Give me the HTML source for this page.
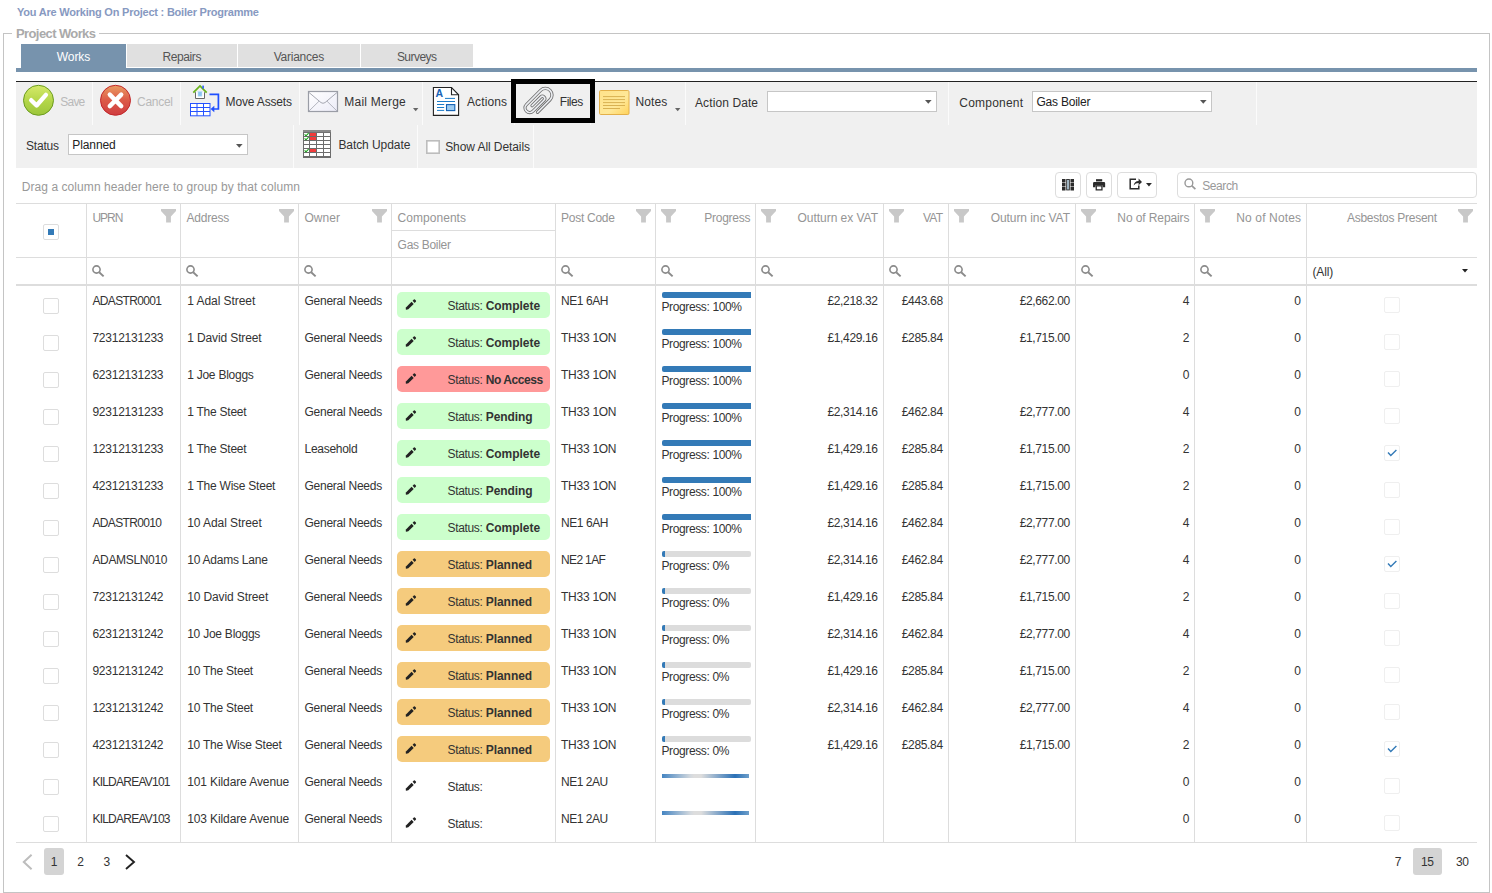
<!DOCTYPE html>
<html lang="en"><head><meta charset="utf-8"><title>Project Works</title>
<style>
html,body{margin:0;padding:0;background:#fff;}
body{width:1492px;height:893px;position:relative;overflow:hidden;font-family:"Liberation Sans",sans-serif;}
.t{position:absolute;white-space:nowrap;line-height:14px;}
svg{overflow:visible;}
</style></head><body>
<span class="t" style="top:5px;font-size:11px;color:#8799c1;letter-spacing:-0.22px;font-weight:bold;left:17px;">You Are Working On Project : Boiler Programme</span>
<div style="position:absolute;left:3px;top:33px;width:1485px;height:858px;border:1px solid #c4c4c4;"></div>
<div style="position:absolute;left:12px;top:26px;width:87px;height:14px;background:#fff;"></div>
<span class="t" style="top:27px;font-size:13px;color:#aaa;letter-spacing:-0.60px;font-weight:bold;left:16px;">Project Works</span>
<div style="position:absolute;left:16px;top:68px;width:1461px;height:4px;background:#7793ad;"></div>
<div style="position:absolute;left:21px;top:44px;width:105px;height:24px;background:#7793ad;"></div>
<div style="position:absolute;left:127px;top:44px;width:110px;height:23px;background:#e0e0e0;"></div>
<span class="t" style="top:50px;font-size:12px;color:#555;letter-spacing:-0.43px;left:-18px;width:399.571px;text-align:center;padding-left:0px;">Repairs</span>
<div style="position:absolute;left:238px;top:44px;width:122px;height:23px;background:#e0e0e0;"></div>
<span class="t" style="top:50px;font-size:12px;color:#555;letter-spacing:-0.25px;left:99px;width:399.745px;text-align:center;padding-left:0px;">Variances</span>
<div style="position:absolute;left:361px;top:44px;width:112px;height:23px;background:#e0e0e0;"></div>
<span class="t" style="top:50px;font-size:12px;color:#555;letter-spacing:-0.52px;left:217px;width:399.483px;text-align:center;padding-left:0px;">Surveys</span>
<span class="t" style="top:50px;font-size:12px;color:#fff;letter-spacing:-0.08px;left:-126.5px;width:399.922px;text-align:center;padding-left:0px;">Works</span>
<div style="position:absolute;left:16px;top:81px;width:1461px;height:1px;background:#222;"></div>
<div style="position:absolute;left:16px;top:82px;width:1461px;height:86px;background:#f0f0f0;"></div>
<div style="position:absolute;left:92px;top:82px;width:1px;height:43px;background:#fbfbfb;"></div>
<div style="position:absolute;left:180px;top:82px;width:1px;height:43px;background:#fbfbfb;"></div>
<div style="position:absolute;left:299px;top:82px;width:1px;height:43px;background:#fbfbfb;"></div>
<div style="position:absolute;left:422px;top:82px;width:1px;height:43px;background:#fbfbfb;"></div>
<div style="position:absolute;left:514px;top:82px;width:1px;height:43px;background:#fbfbfb;"></div>
<div style="position:absolute;left:590px;top:82px;width:1px;height:43px;background:#fbfbfb;"></div>
<div style="position:absolute;left:685px;top:82px;width:1px;height:43px;background:#fbfbfb;"></div>
<div style="position:absolute;left:948px;top:82px;width:1px;height:43px;background:#fbfbfb;"></div>
<div style="position:absolute;left:1256px;top:82px;width:1px;height:43px;background:#fbfbfb;"></div>
<div style="position:absolute;left:293px;top:125px;width:1px;height:43px;background:#fbfbfb;"></div>
<div style="position:absolute;left:417px;top:125px;width:1px;height:43px;background:#fbfbfb;"></div>
<div style="position:absolute;left:533px;top:125px;width:1px;height:43px;background:#fbfbfb;"></div>
<svg style="position:absolute;left:22px;top:84px" width="33" height="33" viewBox="0 0 33 33"><defs><linearGradient id="gs" x1="0" y1="0" x2="0" y2="1"><stop offset="0" stop-color="#d6ea6a"/><stop offset="0.55" stop-color="#b2d548"/><stop offset="1" stop-color="#9cc63a"/></linearGradient></defs>
<circle cx="16.5" cy="16.3" r="15" fill="url(#gs)" stroke="#6c9c20" stroke-width="1"/>
<path d="M9.2 16.2 L14.6 21.5 L23.9 10.9" fill="none" stroke="#fff" stroke-width="4.4" stroke-linecap="round" stroke-linejoin="round"/></svg>
<span class="t" style="top:95px;font-size:12px;color:#b9b9b9;letter-spacing:-0.79px;left:60.3px;">Save</span>
<svg style="position:absolute;left:99px;top:84px" width="33" height="33" viewBox="0 0 33 33"><defs><linearGradient id="gc" x1="0" y1="0" x2="0" y2="1"><stop offset="0" stop-color="#ea9c62"/><stop offset="0.5" stop-color="#dc5a48"/><stop offset="1" stop-color="#cf3c40"/></linearGradient></defs>
<circle cx="16.5" cy="16.3" r="15" fill="url(#gc)" stroke="#c2282c" stroke-width="1"/>
<path d="M10.8 10.6 L22.2 22.1 M22.2 10.6 L10.8 22.1" fill="none" stroke="#fff" stroke-width="4.4" stroke-linecap="round"/></svg>
<span class="t" style="top:95px;font-size:12px;color:#b9b9b9;letter-spacing:-0.27px;left:137px;">Cancel</span>
<svg style="position:absolute;left:188px;top:84px" width="33" height="33" viewBox="0 0 33 33"><path d="M5.3 8.6 L12 1.9 L18.7 8.6" fill="none" stroke="#69b31c" stroke-width="1.8" stroke-linejoin="miter"/>
<rect x="14.3" y="1.6" width="1.6" height="3" fill="#2a5cff"/>
<path d="M7.5 8.2 V14.5 H16.5 V8.2" fill="#fff" stroke="#666" stroke-width="1"/>
<rect x="10" y="7.6" width="4" height="4.6" fill="#8cc4f0" stroke="#bfe0f8" stroke-width="0.6"/>
<rect x="2.5" y="19.5" width="19.5" height="12.3" fill="#fff" stroke="#2552ff" stroke-width="1"/>
<path d="M2.5 23.5 H22 M2.5 27.5 H22 M9 19.5 V31.8 M15.5 19.5 V31.8" stroke="#2552ff" stroke-width="1" fill="none"/>
<path d="M21.5 10.3 H30.4 V25 H25" fill="none" stroke="#1f4fff" stroke-width="1.7"/>
<path d="M22.6 25 L26.3 21.8 V28.2 Z" fill="#1f4fff"/></svg>
<span class="t" style="top:95px;font-size:12px;color:#333;letter-spacing:-0.16px;left:225.6px;">Move Assets</span>
<svg style="position:absolute;left:306px;top:89px" width="34" height="25" viewBox="0 0 34 25"><defs><linearGradient id="gm" x1="0" y1="0" x2="1" y2="1"><stop offset="0" stop-color="#ffffff"/><stop offset="1" stop-color="#ececf8"/></linearGradient></defs>
<rect x="2.5" y="2.5" width="29" height="20" fill="url(#gm)" stroke="#9a9da6" stroke-width="1.2"/>
<path d="M3 3.5 L15 13.6 Q17 15 19 13.6 L31 3.5" fill="none" stroke="#a6a8b2" stroke-width="1"/>
<path d="M3 22 L13 12.2 M31 22 L21 12.2" fill="none" stroke="#b4b6c0" stroke-width="1"/></svg>
<span class="t" style="top:95px;font-size:12px;color:#333;letter-spacing:0.23px;left:344.3px;">Mail Merge</span>
<svg style="position:absolute;left:413px;top:108px" width="6" height="4" viewBox="0 0 6 4"><path d="M0 0 H5.4 L2.7 3.2 Z" fill="#666"/></svg>
<svg style="position:absolute;left:431px;top:85px" width="30" height="33" viewBox="0 0 30 33"><path d="M2.4 2.5 H20.5 L27.6 9.8 V30.4 H2.4 Z" fill="#fff" stroke="#222" stroke-width="1.1"/>
<path d="M20.5 2.5 V9.8 H27.6" fill="none" stroke="#222" stroke-width="1.1"/>
<text x="4.6" y="11.8" font-family="Liberation Sans, sans-serif" font-weight="bold" font-size="10.5" fill="#1763b5">A</text>
<path d="M14 13.4 H24 M6 16.5 H24 M6 19.5 H13.2 M6 22.5 H13.2 M6 25.4 H13.2" stroke="#1a7cc9" stroke-width="1" fill="none"/>
<rect x="15.5" y="19.6" width="8.3" height="6" fill="#9ccbf0" stroke="#1160b2" stroke-width="1.1"/></svg>
<span class="t" style="top:95px;font-size:12px;color:#333;letter-spacing:0.11px;left:467px;">Actions</span>
<div style="position:absolute;left:511px;top:79px;width:74px;height:34px;border:5px solid #000;"></div>
<svg style="position:absolute;left:520px;top:84px" width="36" height="34" viewBox="0 0 36 34"><g transform="translate(18,17) rotate(-45)" fill="none" stroke-linecap="round" stroke-linejoin="round">
<path d="M-8.3 7.64 H9.4 A6.65 6.65 0 0 0 9.4 -5.66 H-10.7 A4.68 4.68 0 0 0 -10.7 3.7 H4.8 A2.3 2.3 0 0 0 4.8 -0.9 H-7.5" stroke="#707070" stroke-width="3.3"/>
<path d="M-8.3 7.64 H9.4 A6.65 6.65 0 0 0 9.4 -5.66 H-10.7 A4.68 4.68 0 0 0 -10.7 3.7 H4.8 A2.3 2.3 0 0 0 4.8 -0.9 H-7.5" stroke="#eceef2" stroke-width="1.6"/>
</g></svg>
<span class="t" style="top:95px;font-size:12px;color:#333;letter-spacing:-0.49px;left:559.8px;">Files</span>
<svg style="position:absolute;left:598px;top:89px" width="33" height="27" viewBox="0 0 33 27"><defs><linearGradient id="gn" x1="0" y1="0" x2="1" y2="1"><stop offset="0" stop-color="#ffe28a"/><stop offset="0.6" stop-color="#ffe898"/><stop offset="1" stop-color="#ffd25a"/></linearGradient></defs>
<rect x="1.5" y="1.5" width="29.5" height="24" rx="1.2" fill="url(#gn)" stroke="#e3b04a" stroke-width="1"/>
<path d="M5 7.6 H27 M5 10.6 H27 M5 13.6 H27 M5 16.5 H27 M5 19.5 H22" stroke="#d9b152" stroke-width="1" fill="none"/></svg>
<span class="t" style="top:95px;font-size:12px;color:#333;letter-spacing:0.11px;left:635.4px;">Notes</span>
<svg style="position:absolute;left:675px;top:108px" width="6" height="4" viewBox="0 0 6 4"><path d="M0 0 H5.4 L2.7 3.2 Z" fill="#666"/></svg>
<span class="t" style="top:96px;font-size:12px;color:#333;letter-spacing:0.10px;left:695px;">Action Date</span>
<div style="position:absolute;left:767px;top:91px;width:168px;height:19px;background:#fff;border:1px solid #c6c6c6;"></div>
<svg style="position:absolute;left:925px;top:100px" width="8" height="5" viewBox="0 0 8 5"><path d="M0 0 H6.6 L3.3 3.8 Z" fill="#555"/></svg>
<span class="t" style="top:96px;font-size:12px;color:#333;letter-spacing:0.21px;left:959.3px;">Component</span>
<div style="position:absolute;left:1032px;top:91px;width:178px;height:19px;background:#fff;border:1px solid #c6c6c6;"></div>
<span class="t" style="top:95px;font-size:12px;color:#222;letter-spacing:-0.23px;left:1036.5px;">Gas Boiler</span>
<svg style="position:absolute;left:1200px;top:100px" width="8" height="5" viewBox="0 0 8 5"><path d="M0 0 H6.6 L3.3 3.8 Z" fill="#555"/></svg>
<span class="t" style="top:139px;font-size:12px;color:#333;letter-spacing:-0.21px;left:26px;">Status</span>
<div style="position:absolute;left:68px;top:134px;width:178px;height:19px;background:#fff;border:1px solid #c6c6c6;"></div>
<span class="t" style="top:138px;font-size:12px;color:#222;letter-spacing:-0.09px;left:72.3px;">Planned</span>
<svg style="position:absolute;left:236px;top:144px" width="8" height="5" viewBox="0 0 8 5"><path d="M0 0 H6.6 L3.3 3.8 Z" fill="#555"/></svg>
<svg style="position:absolute;left:303px;top:130px" width="28" height="28" viewBox="0 0 28 28"><rect x="0" y="0" width="28" height="28" fill="#6c6c6c"/><rect x="0" y="0" width="28" height="2.2" fill="#8a8a8a"/><rect x="1" y="3" width="5" height="3" fill="#fff"/><rect x="7" y="3" width="6" height="3" fill="#f23c3c"/><rect x="14" y="3" width="6" height="3" fill="#fff"/><rect x="21" y="3" width="6" height="3" fill="#fff"/><path d="M1.6 4.4 L3 5.8 L5.6 3.2" stroke="#10a010" stroke-width="1.1" fill="none"/><rect x="1" y="7" width="5" height="3" fill="#fff"/><rect x="7" y="7" width="6" height="3" fill="#f23c3c"/><rect x="14" y="7" width="6" height="3" fill="#fff"/><rect x="21" y="7" width="6" height="3" fill="#fff"/><path d="M1.6 8.4 L3 9.8 L5.6 7.2" stroke="#10a010" stroke-width="1.1" fill="none"/><rect x="1" y="11" width="5" height="3" fill="#fff"/><rect x="7" y="11" width="6" height="3" fill="#fff"/><rect x="14" y="11" width="6" height="3" fill="#fff"/><rect x="21" y="11" width="6" height="3" fill="#fff"/><rect x="1" y="15" width="5" height="3" fill="#fff"/><rect x="7" y="15" width="6" height="3" fill="#fff"/><rect x="14" y="15" width="6" height="3" fill="#fff"/><rect x="21" y="15" width="6" height="3" fill="#fff"/><rect x="1" y="19" width="5" height="3" fill="#fff"/><rect x="7" y="19" width="6" height="3" fill="#f23c3c"/><rect x="14" y="19" width="6" height="3" fill="#fff"/><rect x="21" y="19" width="6" height="3" fill="#fff"/><path d="M1.6 20.4 L3 21.8 L5.6 19.2" stroke="#10a010" stroke-width="1.1" fill="none"/><rect x="1" y="23" width="5" height="3" fill="#fff"/><rect x="7" y="23" width="6" height="3" fill="#fff"/><rect x="14" y="23" width="6" height="3" fill="#fff"/><rect x="21" y="23" width="6" height="3" fill="#fff"/></svg>
<span class="t" style="top:138px;font-size:12px;color:#333;letter-spacing:-0.07px;left:338.4px;">Batch Update</span>
<svg style="position:absolute;left:426px;top:140px" width="14" height="14" viewBox="0 0 14 14"><rect x="0.8" y="0.8" width="12.4" height="12.4" fill="#fff" stroke="#bdbdbd" stroke-width="1.6"/></svg>
<span class="t" style="top:140px;font-size:12px;color:#333;letter-spacing:-0.08px;left:445.2px;">Show All Details</span>
<span class="t" style="top:180px;font-size:12px;color:#999;letter-spacing:0.07px;left:21.7px;">Drag a column header here to group by that column</span>
<div style="position:absolute;left:1055px;top:172px;width:24px;height:24px;border:1px solid #ddd;border-radius:4px;background:#fff;"></div>
<div style="position:absolute;left:1086px;top:172px;width:24px;height:24px;border:1px solid #ddd;border-radius:4px;background:#fff;"></div>
<div style="position:absolute;left:1117px;top:172px;width:38px;height:24px;border:1px solid #ddd;border-radius:4px;background:#fff;"></div>
<div style="position:absolute;left:1177px;top:172px;width:298px;height:24px;border:1px solid #ddd;border-radius:4px;background:#fff;"></div>
<svg style="position:absolute;left:1062px;top:178.7px" width="12" height="11.4" viewBox="0 0 12 11.4"><path d="M0 0h3.5v3.4H0z M0 4h3.5v3.4H0z M0 8h3.5v3.4H0z M8.5 0h3.5v3.4H8.5z M8.5 4h3.5v3.4H8.5z M8.5 8h3.5v3.4H8.5z" fill="#2b2b2b"/><rect x="4.2" y="0" width="3.6" height="11.4" fill="#2b2b2b"/><rect x="5.2" y="0.9" width="1.6" height="9.6" fill="#bcd6e6"/></svg>
<svg style="position:absolute;left:1093px;top:178.6px" width="12.2" height="11.6" viewBox="0 0 14 13.4"><path d="M3.4 0.2h7.2v2.6H3.4z" fill="#2b2b2b"/><path d="M1.4 3.6h11.2a1.4 1.4 0 0 1 1.4 1.4V9.6h-2.8V7.4H2.8v2.2H0V5a1.4 1.4 0 0 1 1.4-1.4z" fill="#2b2b2b"/><path d="M3.7 8h6.6v4.6H3.7z" fill="#fff" stroke="#2b2b2b" stroke-width="1.5"/></svg>
<svg style="position:absolute;left:1128.4px;top:177.4px" width="16" height="14" viewBox="0 0 16 14"><path d="M8 2.2H2.2v9.6h8.6V8.4" fill="none" stroke="#2b2b2b" stroke-width="1.5"/><path d="M5.6 8.6c.4-3 2.2-4.6 5-4.7V1.6l3.4 3.3-3.4 3.3V6c-2 0-3.6.7-5 2.6z" fill="#2b2b2b"/></svg>
<svg style="position:absolute;left:1146px;top:183px" width="6" height="4" viewBox="0 0 6 4"><path d="M0 0 H5.9 L2.95 3.4 Z" fill="#2b2b2b"/></svg>
<svg style="position:absolute;left:1183.5px;top:178.2px" width="12" height="12" viewBox="0 0 12 12"><circle cx="4.9" cy="4.9" r="3.9" fill="none" stroke="#999" stroke-width="1.4"/><path d="M7.7 7.7 L11.4 11.2" stroke="#999" stroke-width="1.7"/></svg>
<span class="t" style="top:178.5px;font-size:12px;color:#999;letter-spacing:-0.41px;left:1202.2px;">Search</span>
<div style="position:absolute;left:16px;top:203px;width:1461px;height:1px;background:#ddd;"></div>
<div style="position:absolute;left:16px;top:257px;width:1461px;height:1px;background:#ddd;"></div>
<div style="position:absolute;left:16px;top:284px;width:1461px;height:2px;background:#ddd;"></div>
<div style="position:absolute;left:16px;top:842px;width:1461px;height:1px;background:#ddd;"></div>
<div style="position:absolute;left:391px;top:230px;width:164px;height:1px;background:#ddd;"></div>
<div style="position:absolute;left:86px;top:204px;width:1px;height:638px;background:#ddd;"></div>
<div style="position:absolute;left:180px;top:204px;width:1px;height:638px;background:#ddd;"></div>
<div style="position:absolute;left:298px;top:204px;width:1px;height:638px;background:#ddd;"></div>
<div style="position:absolute;left:391px;top:204px;width:1px;height:638px;background:#ddd;"></div>
<div style="position:absolute;left:555px;top:204px;width:1px;height:638px;background:#ddd;"></div>
<div style="position:absolute;left:655px;top:204px;width:1px;height:638px;background:#ddd;"></div>
<div style="position:absolute;left:755px;top:204px;width:1px;height:638px;background:#ddd;"></div>
<div style="position:absolute;left:883px;top:204px;width:1px;height:638px;background:#ddd;"></div>
<div style="position:absolute;left:948px;top:204px;width:1px;height:638px;background:#ddd;"></div>
<div style="position:absolute;left:1075px;top:204px;width:1px;height:638px;background:#ddd;"></div>
<div style="position:absolute;left:1194px;top:204px;width:1px;height:638px;background:#ddd;"></div>
<div style="position:absolute;left:1306px;top:204px;width:1px;height:638px;background:#ddd;"></div>
<div style="position:absolute;left:43px;top:224px;width:14px;height:14px;border:1px solid #ddd;border-radius:2px;background:#fff;"></div>
<div style="position:absolute;left:48px;top:229px;width:6px;height:6px;background:#337ab7;"></div>
<span class="t" style="top:211px;font-size:12px;color:#959595;letter-spacing:-1.01px;left:92.4px;">UPRN</span>
<svg style="position:absolute;left:161px;top:209px" width="15" height="14" viewBox="0 0 15 14"><path d="M0 0 H15 V2 L9.9 7.4 V13.6 H5.1 V7.4 L0 2 Z" fill="#c8c8c8"/></svg>
<span class="t" style="top:211px;font-size:12px;color:#959595;letter-spacing:-0.24px;left:186.6px;">Address</span>
<svg style="position:absolute;left:279px;top:209px" width="15" height="14" viewBox="0 0 15 14"><path d="M0 0 H15 V2 L9.9 7.4 V13.6 H5.1 V7.4 L0 2 Z" fill="#c8c8c8"/></svg>
<span class="t" style="top:211px;font-size:12px;color:#959595;letter-spacing:0.01px;left:304.5px;">Owner</span>
<svg style="position:absolute;left:372px;top:209px" width="15" height="14" viewBox="0 0 15 14"><path d="M0 0 H15 V2 L9.9 7.4 V13.6 H5.1 V7.4 L0 2 Z" fill="#c8c8c8"/></svg>
<span class="t" style="top:211px;font-size:12px;color:#959595;letter-spacing:0.04px;left:397.6px;">Components</span>
<span class="t" style="top:238px;font-size:12px;color:#959595;letter-spacing:-0.30px;left:397.6px;">Gas Boiler</span>
<span class="t" style="top:211px;font-size:12px;color:#959595;letter-spacing:-0.26px;left:561px;">Post Code</span>
<svg style="position:absolute;left:636px;top:209px" width="15" height="14" viewBox="0 0 15 14"><path d="M0 0 H15 V2 L9.9 7.4 V13.6 H5.1 V7.4 L0 2 Z" fill="#c8c8c8"/></svg>
<svg style="position:absolute;left:661px;top:209px" width="15" height="14" viewBox="0 0 15 14"><path d="M0 0 H15 V2 L9.9 7.4 V13.6 H5.1 V7.4 L0 2 Z" fill="#c8c8c8"/></svg>
<span class="t" style="top:211px;font-size:12px;color:#959595;letter-spacing:-0.26px;right:741.762px;">Progress</span>
<svg style="position:absolute;left:761px;top:209px" width="15" height="14" viewBox="0 0 15 14"><path d="M0 0 H15 V2 L9.9 7.4 V13.6 H5.1 V7.4 L0 2 Z" fill="#c8c8c8"/></svg>
<span class="t" style="top:211px;font-size:12px;color:#959595;letter-spacing:-0.03px;right:614.032px;">Outturn ex VAT</span>
<svg style="position:absolute;left:889px;top:209px" width="15" height="14" viewBox="0 0 15 14"><path d="M0 0 H15 V2 L9.9 7.4 V13.6 H5.1 V7.4 L0 2 Z" fill="#c8c8c8"/></svg>
<span class="t" style="top:211px;font-size:12px;color:#959595;letter-spacing:-0.78px;right:549.781px;">VAT</span>
<svg style="position:absolute;left:954px;top:209px" width="15" height="14" viewBox="0 0 15 14"><path d="M0 0 H15 V2 L9.9 7.4 V13.6 H5.1 V7.4 L0 2 Z" fill="#c8c8c8"/></svg>
<span class="t" style="top:211px;font-size:12px;color:#959595;letter-spacing:-0.07px;right:422.065px;">Outurn inc VAT</span>
<svg style="position:absolute;left:1081px;top:209px" width="15" height="14" viewBox="0 0 15 14"><path d="M0 0 H15 V2 L9.9 7.4 V13.6 H5.1 V7.4 L0 2 Z" fill="#c8c8c8"/></svg>
<span class="t" style="top:211px;font-size:12px;color:#959595;letter-spacing:-0.10px;right:302.602px;">No of Repairs</span>
<svg style="position:absolute;left:1200px;top:209px" width="15" height="14" viewBox="0 0 15 14"><path d="M0 0 H15 V2 L9.9 7.4 V13.6 H5.1 V7.4 L0 2 Z" fill="#c8c8c8"/></svg>
<span class="t" style="top:211px;font-size:12px;color:#959595;letter-spacing:0.14px;right:190.856px;">No of Notes</span>
<span class="t" style="top:211px;font-size:12px;color:#959595;letter-spacing:-0.26px;left:1192px;width:399.737px;text-align:center;padding-left:0px;">Asbestos Present</span>
<svg style="position:absolute;left:1458px;top:209px" width="15" height="14" viewBox="0 0 15 14"><path d="M0 0 H15 V2 L9.9 7.4 V13.6 H5.1 V7.4 L0 2 Z" fill="#c8c8c8"/></svg>
<svg style="position:absolute;left:91.8px;top:265.3px" width="12" height="12" viewBox="0 0 12 12"><circle cx="4.5" cy="4.5" r="3.6" fill="none" stroke="#8a8a8a" stroke-width="1.6"/><path d="M7.2 7.2 L11.6 11.4" stroke="#8a8a8a" stroke-width="1.9"/></svg>
<svg style="position:absolute;left:185.8px;top:265.3px" width="12" height="12" viewBox="0 0 12 12"><circle cx="4.5" cy="4.5" r="3.6" fill="none" stroke="#8a8a8a" stroke-width="1.6"/><path d="M7.2 7.2 L11.6 11.4" stroke="#8a8a8a" stroke-width="1.9"/></svg>
<svg style="position:absolute;left:303.8px;top:265.3px" width="12" height="12" viewBox="0 0 12 12"><circle cx="4.5" cy="4.5" r="3.6" fill="none" stroke="#8a8a8a" stroke-width="1.6"/><path d="M7.2 7.2 L11.6 11.4" stroke="#8a8a8a" stroke-width="1.9"/></svg>
<svg style="position:absolute;left:560.8px;top:265.3px" width="12" height="12" viewBox="0 0 12 12"><circle cx="4.5" cy="4.5" r="3.6" fill="none" stroke="#8a8a8a" stroke-width="1.6"/><path d="M7.2 7.2 L11.6 11.4" stroke="#8a8a8a" stroke-width="1.9"/></svg>
<svg style="position:absolute;left:660.8px;top:265.3px" width="12" height="12" viewBox="0 0 12 12"><circle cx="4.5" cy="4.5" r="3.6" fill="none" stroke="#8a8a8a" stroke-width="1.6"/><path d="M7.2 7.2 L11.6 11.4" stroke="#8a8a8a" stroke-width="1.9"/></svg>
<svg style="position:absolute;left:760.8px;top:265.3px" width="12" height="12" viewBox="0 0 12 12"><circle cx="4.5" cy="4.5" r="3.6" fill="none" stroke="#8a8a8a" stroke-width="1.6"/><path d="M7.2 7.2 L11.6 11.4" stroke="#8a8a8a" stroke-width="1.9"/></svg>
<svg style="position:absolute;left:888.8px;top:265.3px" width="12" height="12" viewBox="0 0 12 12"><circle cx="4.5" cy="4.5" r="3.6" fill="none" stroke="#8a8a8a" stroke-width="1.6"/><path d="M7.2 7.2 L11.6 11.4" stroke="#8a8a8a" stroke-width="1.9"/></svg>
<svg style="position:absolute;left:953.8px;top:265.3px" width="12" height="12" viewBox="0 0 12 12"><circle cx="4.5" cy="4.5" r="3.6" fill="none" stroke="#8a8a8a" stroke-width="1.6"/><path d="M7.2 7.2 L11.6 11.4" stroke="#8a8a8a" stroke-width="1.9"/></svg>
<svg style="position:absolute;left:1080.8px;top:265.3px" width="12" height="12" viewBox="0 0 12 12"><circle cx="4.5" cy="4.5" r="3.6" fill="none" stroke="#8a8a8a" stroke-width="1.6"/><path d="M7.2 7.2 L11.6 11.4" stroke="#8a8a8a" stroke-width="1.9"/></svg>
<svg style="position:absolute;left:1199.8px;top:265.3px" width="12" height="12" viewBox="0 0 12 12"><circle cx="4.5" cy="4.5" r="3.6" fill="none" stroke="#8a8a8a" stroke-width="1.6"/><path d="M7.2 7.2 L11.6 11.4" stroke="#8a8a8a" stroke-width="1.9"/></svg>
<span class="t" style="top:265px;font-size:12px;color:#333;letter-spacing:-0.13px;left:1312.5px;">(All)</span>
<svg style="position:absolute;left:1462px;top:269px" width="7" height="4" viewBox="0 0 7 4"><path d="M0 0 H6 L3 3.4 Z" fill="#222"/></svg>
<div style="position:absolute;left:43px;top:298px;width:14px;height:14px;border:1px solid #ddd;border-radius:2px;background:#fff;"></div>
<span class="t" style="top:294px;font-size:12px;color:#333;letter-spacing:-0.64px;left:92.4px;">ADASTR0001</span>
<span class="t" style="top:294px;font-size:12px;color:#333;letter-spacing:-0.05px;left:187.2px;">1 Adal Street</span>
<span class="t" style="top:294px;font-size:12px;color:#333;letter-spacing:-0.25px;left:304.5px;">General Needs</span>
<div style="position:absolute;left:397px;top:292px;width:153px;height:26px;background:#ccffcc;border-radius:5px;"></div>
<svg style="position:absolute;left:405px;top:299px" width="12" height="12" viewBox="0 0 12 12"><path d="M1.2 8.2 L6.6 2.8 L8.7 4.9 L3.3 10.3 Q1.6 11 0.8 10.6 Q0.5 9.6 1.2 8.2 Z" fill="#222"/><path d="M7.6 1.8 L8.9 0.5 Q9.4 0.1 9.9 0.6 L10.9 1.6 Q11.3 2.1 10.9 2.6 L9.7 3.9 Z" fill="#222"/></svg>
<span class="t" style="top:298.6px;font-size:12px;color:#333;letter-spacing:-0.33px;left:447.5px;">Status:</span>
<span class="t" style="top:298.6px;font-size:12px;color:#333;letter-spacing:-0.03px;font-weight:bold;left:485.7px;">Complete</span>
<span class="t" style="top:294px;font-size:12px;color:#333;letter-spacing:-0.42px;left:561px;">NE1 6AH</span>
<div style="position:absolute;left:662px;top:292px;width:89px;height:6px;background:#337ab7;border-radius:2px 0 0 2px;"></div>
<span class="t" style="top:300px;font-size:12px;color:#333;letter-spacing:-0.38px;left:661.5px;">Progress: 100%</span>
<span class="t" style="top:294px;font-size:12px;color:#333;letter-spacing:-0.36px;right:614.363px;">£2,218.32</span>
<span class="t" style="top:294px;font-size:12px;color:#333;letter-spacing:-0.33px;right:549.23px;">£443.68</span>
<span class="t" style="top:294px;font-size:12px;color:#333;letter-spacing:-0.36px;right:422.163px;">£2,662.00</span>
<span class="t" style="top:294px;font-size:12px;color:#333;letter-spacing:0.00px;right:302.5px;">4</span>
<span class="t" style="top:294px;font-size:12px;color:#333;letter-spacing:0.00px;right:191px;">0</span>
<div style="position:absolute;left:1384px;top:297px;width:14px;height:14px;border:1px solid #efefef;border-radius:2px;background:#fff;"></div>
<div style="position:absolute;left:43px;top:335px;width:14px;height:14px;border:1px solid #ddd;border-radius:2px;background:#fff;"></div>
<span class="t" style="top:331px;font-size:12px;color:#333;letter-spacing:-0.23px;left:92.4px;">72312131233</span>
<span class="t" style="top:331px;font-size:12px;color:#333;letter-spacing:-0.12px;left:187.2px;">1 David Street</span>
<span class="t" style="top:331px;font-size:12px;color:#333;letter-spacing:-0.25px;left:304.5px;">General Needs</span>
<div style="position:absolute;left:397px;top:329px;width:153px;height:26px;background:#ccffcc;border-radius:5px;"></div>
<svg style="position:absolute;left:405px;top:336px" width="12" height="12" viewBox="0 0 12 12"><path d="M1.2 8.2 L6.6 2.8 L8.7 4.9 L3.3 10.3 Q1.6 11 0.8 10.6 Q0.5 9.6 1.2 8.2 Z" fill="#222"/><path d="M7.6 1.8 L8.9 0.5 Q9.4 0.1 9.9 0.6 L10.9 1.6 Q11.3 2.1 10.9 2.6 L9.7 3.9 Z" fill="#222"/></svg>
<span class="t" style="top:335.6px;font-size:12px;color:#333;letter-spacing:-0.33px;left:447.5px;">Status:</span>
<span class="t" style="top:335.6px;font-size:12px;color:#333;letter-spacing:-0.03px;font-weight:bold;left:485.7px;">Complete</span>
<span class="t" style="top:331px;font-size:12px;color:#333;letter-spacing:-0.26px;left:561px;">TH33 1ON</span>
<div style="position:absolute;left:662px;top:329px;width:89px;height:6px;background:#337ab7;border-radius:2px 0 0 2px;"></div>
<span class="t" style="top:337px;font-size:12px;color:#333;letter-spacing:-0.38px;left:661.5px;">Progress: 100%</span>
<span class="t" style="top:331px;font-size:12px;color:#333;letter-spacing:-0.36px;right:614.363px;">£1,429.16</span>
<span class="t" style="top:331px;font-size:12px;color:#333;letter-spacing:-0.33px;right:549.23px;">£285.84</span>
<span class="t" style="top:331px;font-size:12px;color:#333;letter-spacing:-0.36px;right:422.163px;">£1,715.00</span>
<span class="t" style="top:331px;font-size:12px;color:#333;letter-spacing:0.00px;right:302.5px;">2</span>
<span class="t" style="top:331px;font-size:12px;color:#333;letter-spacing:0.00px;right:191px;">0</span>
<div style="position:absolute;left:1384px;top:334px;width:14px;height:14px;border:1px solid #efefef;border-radius:2px;background:#fff;"></div>
<div style="position:absolute;left:43px;top:372px;width:14px;height:14px;border:1px solid #ddd;border-radius:2px;background:#fff;"></div>
<span class="t" style="top:368px;font-size:12px;color:#333;letter-spacing:-0.23px;left:92.4px;">62312131233</span>
<span class="t" style="top:368px;font-size:12px;color:#333;letter-spacing:-0.25px;left:187.2px;">1 Joe Bloggs</span>
<span class="t" style="top:368px;font-size:12px;color:#333;letter-spacing:-0.25px;left:304.5px;">General Needs</span>
<div style="position:absolute;left:397px;top:366px;width:153px;height:26px;background:#ff9999;border-radius:5px;"></div>
<svg style="position:absolute;left:405px;top:373px" width="12" height="12" viewBox="0 0 12 12"><path d="M1.2 8.2 L6.6 2.8 L8.7 4.9 L3.3 10.3 Q1.6 11 0.8 10.6 Q0.5 9.6 1.2 8.2 Z" fill="#222"/><path d="M7.6 1.8 L8.9 0.5 Q9.4 0.1 9.9 0.6 L10.9 1.6 Q11.3 2.1 10.9 2.6 L9.7 3.9 Z" fill="#222"/></svg>
<span class="t" style="top:372.6px;font-size:12px;color:#333;letter-spacing:-0.33px;left:447.5px;">Status:</span>
<span class="t" style="top:372.6px;font-size:12px;color:#333;letter-spacing:-0.42px;font-weight:bold;left:485.7px;">No Access</span>
<span class="t" style="top:368px;font-size:12px;color:#333;letter-spacing:-0.26px;left:561px;">TH33 1ON</span>
<div style="position:absolute;left:662px;top:366px;width:89px;height:6px;background:#337ab7;border-radius:2px 0 0 2px;"></div>
<span class="t" style="top:374px;font-size:12px;color:#333;letter-spacing:-0.38px;left:661.5px;">Progress: 100%</span>
<span class="t" style="top:368px;font-size:12px;color:#333;letter-spacing:0.00px;right:302.5px;">0</span>
<span class="t" style="top:368px;font-size:12px;color:#333;letter-spacing:0.00px;right:191px;">0</span>
<div style="position:absolute;left:1384px;top:371px;width:14px;height:14px;border:1px solid #efefef;border-radius:2px;background:#fff;"></div>
<div style="position:absolute;left:43px;top:409px;width:14px;height:14px;border:1px solid #ddd;border-radius:2px;background:#fff;"></div>
<span class="t" style="top:405px;font-size:12px;color:#333;letter-spacing:-0.23px;left:92.4px;">92312131233</span>
<span class="t" style="top:405px;font-size:12px;color:#333;letter-spacing:-0.24px;left:187.2px;">1 The Steet</span>
<span class="t" style="top:405px;font-size:12px;color:#333;letter-spacing:-0.25px;left:304.5px;">General Needs</span>
<div style="position:absolute;left:397px;top:403px;width:153px;height:26px;background:#ccffcc;border-radius:5px;"></div>
<svg style="position:absolute;left:405px;top:410px" width="12" height="12" viewBox="0 0 12 12"><path d="M1.2 8.2 L6.6 2.8 L8.7 4.9 L3.3 10.3 Q1.6 11 0.8 10.6 Q0.5 9.6 1.2 8.2 Z" fill="#222"/><path d="M7.6 1.8 L8.9 0.5 Q9.4 0.1 9.9 0.6 L10.9 1.6 Q11.3 2.1 10.9 2.6 L9.7 3.9 Z" fill="#222"/></svg>
<span class="t" style="top:409.6px;font-size:12px;color:#333;letter-spacing:-0.33px;left:447.5px;">Status:</span>
<span class="t" style="top:409.6px;font-size:12px;color:#333;letter-spacing:-0.06px;font-weight:bold;left:485.7px;">Pending</span>
<span class="t" style="top:405px;font-size:12px;color:#333;letter-spacing:-0.26px;left:561px;">TH33 1ON</span>
<div style="position:absolute;left:662px;top:403px;width:89px;height:6px;background:#337ab7;border-radius:2px 0 0 2px;"></div>
<span class="t" style="top:411px;font-size:12px;color:#333;letter-spacing:-0.38px;left:661.5px;">Progress: 100%</span>
<span class="t" style="top:405px;font-size:12px;color:#333;letter-spacing:-0.36px;right:614.363px;">£2,314.16</span>
<span class="t" style="top:405px;font-size:12px;color:#333;letter-spacing:-0.33px;right:549.23px;">£462.84</span>
<span class="t" style="top:405px;font-size:12px;color:#333;letter-spacing:-0.36px;right:422.163px;">£2,777.00</span>
<span class="t" style="top:405px;font-size:12px;color:#333;letter-spacing:0.00px;right:302.5px;">4</span>
<span class="t" style="top:405px;font-size:12px;color:#333;letter-spacing:0.00px;right:191px;">0</span>
<div style="position:absolute;left:1384px;top:408px;width:14px;height:14px;border:1px solid #efefef;border-radius:2px;background:#fff;"></div>
<div style="position:absolute;left:43px;top:446px;width:14px;height:14px;border:1px solid #ddd;border-radius:2px;background:#fff;"></div>
<span class="t" style="top:442px;font-size:12px;color:#333;letter-spacing:-0.23px;left:92.4px;">12312131233</span>
<span class="t" style="top:442px;font-size:12px;color:#333;letter-spacing:-0.24px;left:187.2px;">1 The Steet</span>
<span class="t" style="top:442px;font-size:12px;color:#333;letter-spacing:-0.28px;left:304.5px;">Leasehold</span>
<div style="position:absolute;left:397px;top:440px;width:153px;height:26px;background:#ccffcc;border-radius:5px;"></div>
<svg style="position:absolute;left:405px;top:447px" width="12" height="12" viewBox="0 0 12 12"><path d="M1.2 8.2 L6.6 2.8 L8.7 4.9 L3.3 10.3 Q1.6 11 0.8 10.6 Q0.5 9.6 1.2 8.2 Z" fill="#222"/><path d="M7.6 1.8 L8.9 0.5 Q9.4 0.1 9.9 0.6 L10.9 1.6 Q11.3 2.1 10.9 2.6 L9.7 3.9 Z" fill="#222"/></svg>
<span class="t" style="top:446.6px;font-size:12px;color:#333;letter-spacing:-0.33px;left:447.5px;">Status:</span>
<span class="t" style="top:446.6px;font-size:12px;color:#333;letter-spacing:-0.03px;font-weight:bold;left:485.7px;">Complete</span>
<span class="t" style="top:442px;font-size:12px;color:#333;letter-spacing:-0.26px;left:561px;">TH33 1ON</span>
<div style="position:absolute;left:662px;top:440px;width:89px;height:6px;background:#337ab7;border-radius:2px 0 0 2px;"></div>
<span class="t" style="top:448px;font-size:12px;color:#333;letter-spacing:-0.38px;left:661.5px;">Progress: 100%</span>
<span class="t" style="top:442px;font-size:12px;color:#333;letter-spacing:-0.36px;right:614.363px;">£1,429.16</span>
<span class="t" style="top:442px;font-size:12px;color:#333;letter-spacing:-0.33px;right:549.23px;">£285.84</span>
<span class="t" style="top:442px;font-size:12px;color:#333;letter-spacing:-0.36px;right:422.163px;">£1,715.00</span>
<span class="t" style="top:442px;font-size:12px;color:#333;letter-spacing:0.00px;right:302.5px;">2</span>
<span class="t" style="top:442px;font-size:12px;color:#333;letter-spacing:0.00px;right:191px;">0</span>
<div style="position:absolute;left:1384px;top:445px;width:14px;height:14px;border:1px solid #efefef;border-radius:2px;background:#fff;"></div>
<svg style="position:absolute;left:1386px;top:448px" width="12" height="10" viewBox="0 0 12 10"><path d="M2 4.4 L4.8 7.4 L10.4 2" fill="none" stroke="#337ab7" stroke-width="1.4"/></svg>
<div style="position:absolute;left:43px;top:483px;width:14px;height:14px;border:1px solid #ddd;border-radius:2px;background:#fff;"></div>
<span class="t" style="top:479px;font-size:12px;color:#333;letter-spacing:-0.23px;left:92.4px;">42312131233</span>
<span class="t" style="top:479px;font-size:12px;color:#333;letter-spacing:-0.24px;left:187.2px;">1 The Wise Steet</span>
<span class="t" style="top:479px;font-size:12px;color:#333;letter-spacing:-0.25px;left:304.5px;">General Needs</span>
<div style="position:absolute;left:397px;top:477px;width:153px;height:26px;background:#ccffcc;border-radius:5px;"></div>
<svg style="position:absolute;left:405px;top:484px" width="12" height="12" viewBox="0 0 12 12"><path d="M1.2 8.2 L6.6 2.8 L8.7 4.9 L3.3 10.3 Q1.6 11 0.8 10.6 Q0.5 9.6 1.2 8.2 Z" fill="#222"/><path d="M7.6 1.8 L8.9 0.5 Q9.4 0.1 9.9 0.6 L10.9 1.6 Q11.3 2.1 10.9 2.6 L9.7 3.9 Z" fill="#222"/></svg>
<span class="t" style="top:483.6px;font-size:12px;color:#333;letter-spacing:-0.33px;left:447.5px;">Status:</span>
<span class="t" style="top:483.6px;font-size:12px;color:#333;letter-spacing:-0.06px;font-weight:bold;left:485.7px;">Pending</span>
<span class="t" style="top:479px;font-size:12px;color:#333;letter-spacing:-0.26px;left:561px;">TH33 1ON</span>
<div style="position:absolute;left:662px;top:477px;width:89px;height:6px;background:#337ab7;border-radius:2px 0 0 2px;"></div>
<span class="t" style="top:485px;font-size:12px;color:#333;letter-spacing:-0.38px;left:661.5px;">Progress: 100%</span>
<span class="t" style="top:479px;font-size:12px;color:#333;letter-spacing:-0.36px;right:614.363px;">£1,429.16</span>
<span class="t" style="top:479px;font-size:12px;color:#333;letter-spacing:-0.33px;right:549.23px;">£285.84</span>
<span class="t" style="top:479px;font-size:12px;color:#333;letter-spacing:-0.36px;right:422.163px;">£1,715.00</span>
<span class="t" style="top:479px;font-size:12px;color:#333;letter-spacing:0.00px;right:302.5px;">2</span>
<span class="t" style="top:479px;font-size:12px;color:#333;letter-spacing:0.00px;right:191px;">0</span>
<div style="position:absolute;left:1384px;top:482px;width:14px;height:14px;border:1px solid #efefef;border-radius:2px;background:#fff;"></div>
<div style="position:absolute;left:43px;top:520px;width:14px;height:14px;border:1px solid #ddd;border-radius:2px;background:#fff;"></div>
<span class="t" style="top:516px;font-size:12px;color:#333;letter-spacing:-0.64px;left:92.4px;">ADASTR0010</span>
<span class="t" style="top:516px;font-size:12px;color:#333;letter-spacing:-0.06px;left:187.2px;">10 Adal Street</span>
<span class="t" style="top:516px;font-size:12px;color:#333;letter-spacing:-0.25px;left:304.5px;">General Needs</span>
<div style="position:absolute;left:397px;top:514px;width:153px;height:26px;background:#ccffcc;border-radius:5px;"></div>
<svg style="position:absolute;left:405px;top:521px" width="12" height="12" viewBox="0 0 12 12"><path d="M1.2 8.2 L6.6 2.8 L8.7 4.9 L3.3 10.3 Q1.6 11 0.8 10.6 Q0.5 9.6 1.2 8.2 Z" fill="#222"/><path d="M7.6 1.8 L8.9 0.5 Q9.4 0.1 9.9 0.6 L10.9 1.6 Q11.3 2.1 10.9 2.6 L9.7 3.9 Z" fill="#222"/></svg>
<span class="t" style="top:520.6px;font-size:12px;color:#333;letter-spacing:-0.33px;left:447.5px;">Status:</span>
<span class="t" style="top:520.6px;font-size:12px;color:#333;letter-spacing:-0.03px;font-weight:bold;left:485.7px;">Complete</span>
<span class="t" style="top:516px;font-size:12px;color:#333;letter-spacing:-0.42px;left:561px;">NE1 6AH</span>
<div style="position:absolute;left:662px;top:514px;width:89px;height:6px;background:#337ab7;border-radius:2px 0 0 2px;"></div>
<span class="t" style="top:522px;font-size:12px;color:#333;letter-spacing:-0.38px;left:661.5px;">Progress: 100%</span>
<span class="t" style="top:516px;font-size:12px;color:#333;letter-spacing:-0.36px;right:614.363px;">£2,314.16</span>
<span class="t" style="top:516px;font-size:12px;color:#333;letter-spacing:-0.33px;right:549.23px;">£462.84</span>
<span class="t" style="top:516px;font-size:12px;color:#333;letter-spacing:-0.36px;right:422.163px;">£2,777.00</span>
<span class="t" style="top:516px;font-size:12px;color:#333;letter-spacing:0.00px;right:302.5px;">4</span>
<span class="t" style="top:516px;font-size:12px;color:#333;letter-spacing:0.00px;right:191px;">0</span>
<div style="position:absolute;left:1384px;top:519px;width:14px;height:14px;border:1px solid #efefef;border-radius:2px;background:#fff;"></div>
<div style="position:absolute;left:43px;top:557px;width:14px;height:14px;border:1px solid #ddd;border-radius:2px;background:#fff;"></div>
<span class="t" style="top:553px;font-size:12px;color:#333;letter-spacing:-0.33px;left:92.4px;">ADAMSLN010</span>
<span class="t" style="top:553px;font-size:12px;color:#333;letter-spacing:-0.23px;left:187.2px;">10 Adams Lane</span>
<span class="t" style="top:553px;font-size:12px;color:#333;letter-spacing:-0.25px;left:304.5px;">General Needs</span>
<div style="position:absolute;left:397px;top:551px;width:153px;height:26px;background:#f5cb7d;border-radius:5px;"></div>
<svg style="position:absolute;left:405px;top:558px" width="12" height="12" viewBox="0 0 12 12"><path d="M1.2 8.2 L6.6 2.8 L8.7 4.9 L3.3 10.3 Q1.6 11 0.8 10.6 Q0.5 9.6 1.2 8.2 Z" fill="#222"/><path d="M7.6 1.8 L8.9 0.5 Q9.4 0.1 9.9 0.6 L10.9 1.6 Q11.3 2.1 10.9 2.6 L9.7 3.9 Z" fill="#222"/></svg>
<span class="t" style="top:557.6px;font-size:12px;color:#333;letter-spacing:-0.33px;left:447.5px;">Status:</span>
<span class="t" style="top:557.6px;font-size:12px;color:#333;letter-spacing:-0.03px;font-weight:bold;left:485.7px;">Planned</span>
<span class="t" style="top:553px;font-size:12px;color:#333;letter-spacing:-0.64px;left:561px;">NE2 1AF</span>
<div style="position:absolute;left:662px;top:551px;width:89px;height:6px;background:#dcdcdc;border-radius:2px;"></div>
<div style="position:absolute;left:662px;top:551px;width:2.5px;height:6px;background:#337ab7;border-radius:2px 0 0 2px;"></div>
<span class="t" style="top:559px;font-size:12px;color:#333;letter-spacing:-0.38px;left:661.5px;">Progress: 0%</span>
<span class="t" style="top:553px;font-size:12px;color:#333;letter-spacing:-0.36px;right:614.363px;">£2,314.16</span>
<span class="t" style="top:553px;font-size:12px;color:#333;letter-spacing:-0.33px;right:549.23px;">£462.84</span>
<span class="t" style="top:553px;font-size:12px;color:#333;letter-spacing:-0.36px;right:422.163px;">£2,777.00</span>
<span class="t" style="top:553px;font-size:12px;color:#333;letter-spacing:0.00px;right:302.5px;">4</span>
<span class="t" style="top:553px;font-size:12px;color:#333;letter-spacing:0.00px;right:191px;">0</span>
<div style="position:absolute;left:1384px;top:556px;width:14px;height:14px;border:1px solid #efefef;border-radius:2px;background:#fff;"></div>
<svg style="position:absolute;left:1386px;top:559px" width="12" height="10" viewBox="0 0 12 10"><path d="M2 4.4 L4.8 7.4 L10.4 2" fill="none" stroke="#337ab7" stroke-width="1.4"/></svg>
<div style="position:absolute;left:43px;top:594px;width:14px;height:14px;border:1px solid #ddd;border-radius:2px;background:#fff;"></div>
<span class="t" style="top:590px;font-size:12px;color:#333;letter-spacing:-0.23px;left:92.4px;">72312131242</span>
<span class="t" style="top:590px;font-size:12px;color:#333;letter-spacing:-0.12px;left:187.2px;">10 David Street</span>
<span class="t" style="top:590px;font-size:12px;color:#333;letter-spacing:-0.25px;left:304.5px;">General Needs</span>
<div style="position:absolute;left:397px;top:588px;width:153px;height:26px;background:#f5cb7d;border-radius:5px;"></div>
<svg style="position:absolute;left:405px;top:595px" width="12" height="12" viewBox="0 0 12 12"><path d="M1.2 8.2 L6.6 2.8 L8.7 4.9 L3.3 10.3 Q1.6 11 0.8 10.6 Q0.5 9.6 1.2 8.2 Z" fill="#222"/><path d="M7.6 1.8 L8.9 0.5 Q9.4 0.1 9.9 0.6 L10.9 1.6 Q11.3 2.1 10.9 2.6 L9.7 3.9 Z" fill="#222"/></svg>
<span class="t" style="top:594.6px;font-size:12px;color:#333;letter-spacing:-0.33px;left:447.5px;">Status:</span>
<span class="t" style="top:594.6px;font-size:12px;color:#333;letter-spacing:-0.03px;font-weight:bold;left:485.7px;">Planned</span>
<span class="t" style="top:590px;font-size:12px;color:#333;letter-spacing:-0.26px;left:561px;">TH33 1ON</span>
<div style="position:absolute;left:662px;top:588px;width:89px;height:6px;background:#dcdcdc;border-radius:2px;"></div>
<div style="position:absolute;left:662px;top:588px;width:2.5px;height:6px;background:#337ab7;border-radius:2px 0 0 2px;"></div>
<span class="t" style="top:596px;font-size:12px;color:#333;letter-spacing:-0.38px;left:661.5px;">Progress: 0%</span>
<span class="t" style="top:590px;font-size:12px;color:#333;letter-spacing:-0.36px;right:614.363px;">£1,429.16</span>
<span class="t" style="top:590px;font-size:12px;color:#333;letter-spacing:-0.33px;right:549.23px;">£285.84</span>
<span class="t" style="top:590px;font-size:12px;color:#333;letter-spacing:-0.36px;right:422.163px;">£1,715.00</span>
<span class="t" style="top:590px;font-size:12px;color:#333;letter-spacing:0.00px;right:302.5px;">2</span>
<span class="t" style="top:590px;font-size:12px;color:#333;letter-spacing:0.00px;right:191px;">0</span>
<div style="position:absolute;left:1384px;top:593px;width:14px;height:14px;border:1px solid #efefef;border-radius:2px;background:#fff;"></div>
<div style="position:absolute;left:43px;top:631px;width:14px;height:14px;border:1px solid #ddd;border-radius:2px;background:#fff;"></div>
<span class="t" style="top:627px;font-size:12px;color:#333;letter-spacing:-0.23px;left:92.4px;">62312131242</span>
<span class="t" style="top:627px;font-size:12px;color:#333;letter-spacing:-0.24px;left:187.2px;">10 Joe Bloggs</span>
<span class="t" style="top:627px;font-size:12px;color:#333;letter-spacing:-0.25px;left:304.5px;">General Needs</span>
<div style="position:absolute;left:397px;top:625px;width:153px;height:26px;background:#f5cb7d;border-radius:5px;"></div>
<svg style="position:absolute;left:405px;top:632px" width="12" height="12" viewBox="0 0 12 12"><path d="M1.2 8.2 L6.6 2.8 L8.7 4.9 L3.3 10.3 Q1.6 11 0.8 10.6 Q0.5 9.6 1.2 8.2 Z" fill="#222"/><path d="M7.6 1.8 L8.9 0.5 Q9.4 0.1 9.9 0.6 L10.9 1.6 Q11.3 2.1 10.9 2.6 L9.7 3.9 Z" fill="#222"/></svg>
<span class="t" style="top:631.6px;font-size:12px;color:#333;letter-spacing:-0.33px;left:447.5px;">Status:</span>
<span class="t" style="top:631.6px;font-size:12px;color:#333;letter-spacing:-0.03px;font-weight:bold;left:485.7px;">Planned</span>
<span class="t" style="top:627px;font-size:12px;color:#333;letter-spacing:-0.26px;left:561px;">TH33 1ON</span>
<div style="position:absolute;left:662px;top:625px;width:89px;height:6px;background:#dcdcdc;border-radius:2px;"></div>
<div style="position:absolute;left:662px;top:625px;width:2.5px;height:6px;background:#337ab7;border-radius:2px 0 0 2px;"></div>
<span class="t" style="top:633px;font-size:12px;color:#333;letter-spacing:-0.38px;left:661.5px;">Progress: 0%</span>
<span class="t" style="top:627px;font-size:12px;color:#333;letter-spacing:-0.36px;right:614.363px;">£2,314.16</span>
<span class="t" style="top:627px;font-size:12px;color:#333;letter-spacing:-0.33px;right:549.23px;">£462.84</span>
<span class="t" style="top:627px;font-size:12px;color:#333;letter-spacing:-0.36px;right:422.163px;">£2,777.00</span>
<span class="t" style="top:627px;font-size:12px;color:#333;letter-spacing:0.00px;right:302.5px;">4</span>
<span class="t" style="top:627px;font-size:12px;color:#333;letter-spacing:0.00px;right:191px;">0</span>
<div style="position:absolute;left:1384px;top:630px;width:14px;height:14px;border:1px solid #efefef;border-radius:2px;background:#fff;"></div>
<div style="position:absolute;left:43px;top:668px;width:14px;height:14px;border:1px solid #ddd;border-radius:2px;background:#fff;"></div>
<span class="t" style="top:664px;font-size:12px;color:#333;letter-spacing:-0.23px;left:92.4px;">92312131242</span>
<span class="t" style="top:664px;font-size:12px;color:#333;letter-spacing:-0.23px;left:187.2px;">10 The Steet</span>
<span class="t" style="top:664px;font-size:12px;color:#333;letter-spacing:-0.25px;left:304.5px;">General Needs</span>
<div style="position:absolute;left:397px;top:662px;width:153px;height:26px;background:#f5cb7d;border-radius:5px;"></div>
<svg style="position:absolute;left:405px;top:669px" width="12" height="12" viewBox="0 0 12 12"><path d="M1.2 8.2 L6.6 2.8 L8.7 4.9 L3.3 10.3 Q1.6 11 0.8 10.6 Q0.5 9.6 1.2 8.2 Z" fill="#222"/><path d="M7.6 1.8 L8.9 0.5 Q9.4 0.1 9.9 0.6 L10.9 1.6 Q11.3 2.1 10.9 2.6 L9.7 3.9 Z" fill="#222"/></svg>
<span class="t" style="top:668.6px;font-size:12px;color:#333;letter-spacing:-0.33px;left:447.5px;">Status:</span>
<span class="t" style="top:668.6px;font-size:12px;color:#333;letter-spacing:-0.03px;font-weight:bold;left:485.7px;">Planned</span>
<span class="t" style="top:664px;font-size:12px;color:#333;letter-spacing:-0.26px;left:561px;">TH33 1ON</span>
<div style="position:absolute;left:662px;top:662px;width:89px;height:6px;background:#dcdcdc;border-radius:2px;"></div>
<div style="position:absolute;left:662px;top:662px;width:2.5px;height:6px;background:#337ab7;border-radius:2px 0 0 2px;"></div>
<span class="t" style="top:670px;font-size:12px;color:#333;letter-spacing:-0.38px;left:661.5px;">Progress: 0%</span>
<span class="t" style="top:664px;font-size:12px;color:#333;letter-spacing:-0.36px;right:614.363px;">£1,429.16</span>
<span class="t" style="top:664px;font-size:12px;color:#333;letter-spacing:-0.33px;right:549.23px;">£285.84</span>
<span class="t" style="top:664px;font-size:12px;color:#333;letter-spacing:-0.36px;right:422.163px;">£1,715.00</span>
<span class="t" style="top:664px;font-size:12px;color:#333;letter-spacing:0.00px;right:302.5px;">2</span>
<span class="t" style="top:664px;font-size:12px;color:#333;letter-spacing:0.00px;right:191px;">0</span>
<div style="position:absolute;left:1384px;top:667px;width:14px;height:14px;border:1px solid #efefef;border-radius:2px;background:#fff;"></div>
<div style="position:absolute;left:43px;top:705px;width:14px;height:14px;border:1px solid #ddd;border-radius:2px;background:#fff;"></div>
<span class="t" style="top:701px;font-size:12px;color:#333;letter-spacing:-0.23px;left:92.4px;">12312131242</span>
<span class="t" style="top:701px;font-size:12px;color:#333;letter-spacing:-0.23px;left:187.2px;">10 The Steet</span>
<span class="t" style="top:701px;font-size:12px;color:#333;letter-spacing:-0.25px;left:304.5px;">General Needs</span>
<div style="position:absolute;left:397px;top:699px;width:153px;height:26px;background:#f5cb7d;border-radius:5px;"></div>
<svg style="position:absolute;left:405px;top:706px" width="12" height="12" viewBox="0 0 12 12"><path d="M1.2 8.2 L6.6 2.8 L8.7 4.9 L3.3 10.3 Q1.6 11 0.8 10.6 Q0.5 9.6 1.2 8.2 Z" fill="#222"/><path d="M7.6 1.8 L8.9 0.5 Q9.4 0.1 9.9 0.6 L10.9 1.6 Q11.3 2.1 10.9 2.6 L9.7 3.9 Z" fill="#222"/></svg>
<span class="t" style="top:705.6px;font-size:12px;color:#333;letter-spacing:-0.33px;left:447.5px;">Status:</span>
<span class="t" style="top:705.6px;font-size:12px;color:#333;letter-spacing:-0.03px;font-weight:bold;left:485.7px;">Planned</span>
<span class="t" style="top:701px;font-size:12px;color:#333;letter-spacing:-0.26px;left:561px;">TH33 1ON</span>
<div style="position:absolute;left:662px;top:699px;width:89px;height:6px;background:#dcdcdc;border-radius:2px;"></div>
<div style="position:absolute;left:662px;top:699px;width:2.5px;height:6px;background:#337ab7;border-radius:2px 0 0 2px;"></div>
<span class="t" style="top:707px;font-size:12px;color:#333;letter-spacing:-0.38px;left:661.5px;">Progress: 0%</span>
<span class="t" style="top:701px;font-size:12px;color:#333;letter-spacing:-0.36px;right:614.363px;">£2,314.16</span>
<span class="t" style="top:701px;font-size:12px;color:#333;letter-spacing:-0.33px;right:549.23px;">£462.84</span>
<span class="t" style="top:701px;font-size:12px;color:#333;letter-spacing:-0.36px;right:422.163px;">£2,777.00</span>
<span class="t" style="top:701px;font-size:12px;color:#333;letter-spacing:0.00px;right:302.5px;">4</span>
<span class="t" style="top:701px;font-size:12px;color:#333;letter-spacing:0.00px;right:191px;">0</span>
<div style="position:absolute;left:1384px;top:704px;width:14px;height:14px;border:1px solid #efefef;border-radius:2px;background:#fff;"></div>
<div style="position:absolute;left:43px;top:742px;width:14px;height:14px;border:1px solid #ddd;border-radius:2px;background:#fff;"></div>
<span class="t" style="top:738px;font-size:12px;color:#333;letter-spacing:-0.23px;left:92.4px;">42312131242</span>
<span class="t" style="top:738px;font-size:12px;color:#333;letter-spacing:-0.24px;left:187.2px;">10 The Wise Steet</span>
<span class="t" style="top:738px;font-size:12px;color:#333;letter-spacing:-0.25px;left:304.5px;">General Needs</span>
<div style="position:absolute;left:397px;top:736px;width:153px;height:26px;background:#f5cb7d;border-radius:5px;"></div>
<svg style="position:absolute;left:405px;top:743px" width="12" height="12" viewBox="0 0 12 12"><path d="M1.2 8.2 L6.6 2.8 L8.7 4.9 L3.3 10.3 Q1.6 11 0.8 10.6 Q0.5 9.6 1.2 8.2 Z" fill="#222"/><path d="M7.6 1.8 L8.9 0.5 Q9.4 0.1 9.9 0.6 L10.9 1.6 Q11.3 2.1 10.9 2.6 L9.7 3.9 Z" fill="#222"/></svg>
<span class="t" style="top:742.6px;font-size:12px;color:#333;letter-spacing:-0.33px;left:447.5px;">Status:</span>
<span class="t" style="top:742.6px;font-size:12px;color:#333;letter-spacing:-0.03px;font-weight:bold;left:485.7px;">Planned</span>
<span class="t" style="top:738px;font-size:12px;color:#333;letter-spacing:-0.26px;left:561px;">TH33 1ON</span>
<div style="position:absolute;left:662px;top:736px;width:89px;height:6px;background:#dcdcdc;border-radius:2px;"></div>
<div style="position:absolute;left:662px;top:736px;width:2.5px;height:6px;background:#337ab7;border-radius:2px 0 0 2px;"></div>
<span class="t" style="top:744px;font-size:12px;color:#333;letter-spacing:-0.38px;left:661.5px;">Progress: 0%</span>
<span class="t" style="top:738px;font-size:12px;color:#333;letter-spacing:-0.36px;right:614.363px;">£1,429.16</span>
<span class="t" style="top:738px;font-size:12px;color:#333;letter-spacing:-0.33px;right:549.23px;">£285.84</span>
<span class="t" style="top:738px;font-size:12px;color:#333;letter-spacing:-0.36px;right:422.163px;">£1,715.00</span>
<span class="t" style="top:738px;font-size:12px;color:#333;letter-spacing:0.00px;right:302.5px;">2</span>
<span class="t" style="top:738px;font-size:12px;color:#333;letter-spacing:0.00px;right:191px;">0</span>
<div style="position:absolute;left:1384px;top:741px;width:14px;height:14px;border:1px solid #efefef;border-radius:2px;background:#fff;"></div>
<svg style="position:absolute;left:1386px;top:744px" width="12" height="10" viewBox="0 0 12 10"><path d="M2 4.4 L4.8 7.4 L10.4 2" fill="none" stroke="#337ab7" stroke-width="1.4"/></svg>
<div style="position:absolute;left:43px;top:779px;width:14px;height:14px;border:1px solid #ddd;border-radius:2px;background:#fff;"></div>
<span class="t" style="top:775px;font-size:12px;color:#333;letter-spacing:-0.76px;left:92.4px;">KILDAREAV101</span>
<span class="t" style="top:775px;font-size:12px;color:#333;letter-spacing:-0.11px;left:187.2px;">101 Kildare Avenue</span>
<span class="t" style="top:775px;font-size:12px;color:#333;letter-spacing:-0.25px;left:304.5px;">General Needs</span>
<svg style="position:absolute;left:405px;top:780px" width="12" height="12" viewBox="0 0 12 12"><path d="M1.2 8.2 L6.6 2.8 L8.7 4.9 L3.3 10.3 Q1.6 11 0.8 10.6 Q0.5 9.6 1.2 8.2 Z" fill="#222"/><path d="M7.6 1.8 L8.9 0.5 Q9.4 0.1 9.9 0.6 L10.9 1.6 Q11.3 2.1 10.9 2.6 L9.7 3.9 Z" fill="#222"/></svg>
<span class="t" style="top:779.6px;font-size:12px;color:#333;letter-spacing:-0.33px;left:447.5px;">Status:</span>
<span class="t" style="top:775px;font-size:12px;color:#333;letter-spacing:-0.46px;left:561px;">NE1 2AU</span>
<div style="position:absolute;left:662px;top:773.6px;width:87.3px;height:4.6px;background:linear-gradient(90deg,#4585c2 0%,#d4d9de 33%,#dddddd 37%,#dddddd 45%,#2a70b6 84%,#6e9fca 100%);"></div>
<span class="t" style="top:775px;font-size:12px;color:#333;letter-spacing:0.00px;right:302.5px;">0</span>
<span class="t" style="top:775px;font-size:12px;color:#333;letter-spacing:0.00px;right:191px;">0</span>
<div style="position:absolute;left:1384px;top:778px;width:14px;height:14px;border:1px solid #efefef;border-radius:2px;background:#fff;"></div>
<div style="position:absolute;left:43px;top:816px;width:14px;height:14px;border:1px solid #ddd;border-radius:2px;background:#fff;"></div>
<span class="t" style="top:812px;font-size:12px;color:#333;letter-spacing:-0.76px;left:92.4px;">KILDAREAV103</span>
<span class="t" style="top:812px;font-size:12px;color:#333;letter-spacing:-0.11px;left:187.2px;">103 Kildare Avenue</span>
<span class="t" style="top:812px;font-size:12px;color:#333;letter-spacing:-0.25px;left:304.5px;">General Needs</span>
<svg style="position:absolute;left:405px;top:817px" width="12" height="12" viewBox="0 0 12 12"><path d="M1.2 8.2 L6.6 2.8 L8.7 4.9 L3.3 10.3 Q1.6 11 0.8 10.6 Q0.5 9.6 1.2 8.2 Z" fill="#222"/><path d="M7.6 1.8 L8.9 0.5 Q9.4 0.1 9.9 0.6 L10.9 1.6 Q11.3 2.1 10.9 2.6 L9.7 3.9 Z" fill="#222"/></svg>
<span class="t" style="top:816.6px;font-size:12px;color:#333;letter-spacing:-0.33px;left:447.5px;">Status:</span>
<span class="t" style="top:812px;font-size:12px;color:#333;letter-spacing:-0.46px;left:561px;">NE1 2AU</span>
<div style="position:absolute;left:662px;top:810.6px;width:87.3px;height:4.6px;background:linear-gradient(90deg,#4585c2 0%,#d4d9de 33%,#dddddd 37%,#dddddd 45%,#2a70b6 84%,#6e9fca 100%);"></div>
<span class="t" style="top:812px;font-size:12px;color:#333;letter-spacing:0.00px;right:302.5px;">0</span>
<span class="t" style="top:812px;font-size:12px;color:#333;letter-spacing:0.00px;right:191px;">0</span>
<div style="position:absolute;left:1384px;top:815px;width:14px;height:14px;border:1px solid #efefef;border-radius:2px;background:#fff;"></div>
<svg style="position:absolute;left:22px;top:854px" width="11" height="16" viewBox="0 0 11 16"><path d="M9.6 0.8 L1.8 8 L9.6 15.2" fill="none" stroke="#bdbdbd" stroke-width="2"/></svg>
<div style="position:absolute;left:44px;top:848px;width:20px;height:27px;background:#d4d4d4;border-radius:3px;"></div>
<span class="t" style="top:855px;font-size:12px;color:#333;letter-spacing:0.00px;left:-146px;width:400px;text-align:center;padding-left:0px;">1</span>
<span class="t" style="top:855px;font-size:12px;color:#333;letter-spacing:0.00px;left:-119.4px;width:400px;text-align:center;padding-left:0px;">2</span>
<span class="t" style="top:855px;font-size:12px;color:#333;letter-spacing:0.00px;left:-93.2px;width:400px;text-align:center;padding-left:0px;">3</span>
<svg style="position:absolute;left:124px;top:854px" width="12" height="16" viewBox="0 0 12 16"><path d="M2 1 L10 8 L2 15" fill="none" stroke="#222" stroke-width="1.9"/></svg>
<span class="t" style="top:855px;font-size:12px;color:#333;letter-spacing:0.00px;left:1198px;width:400px;text-align:center;padding-left:0px;">7</span>
<div style="position:absolute;left:1413px;top:848px;width:29px;height:27px;background:#d4d4d4;border-radius:3px;"></div>
<span class="t" style="top:855px;font-size:12px;color:#333;letter-spacing:-0.42px;left:1227.5px;width:399.577px;text-align:center;padding-left:0px;">15</span>
<span class="t" style="top:855px;font-size:12px;color:#333;letter-spacing:-0.42px;left:1262.5px;width:399.577px;text-align:center;padding-left:0px;">30</span>
</body></html>
